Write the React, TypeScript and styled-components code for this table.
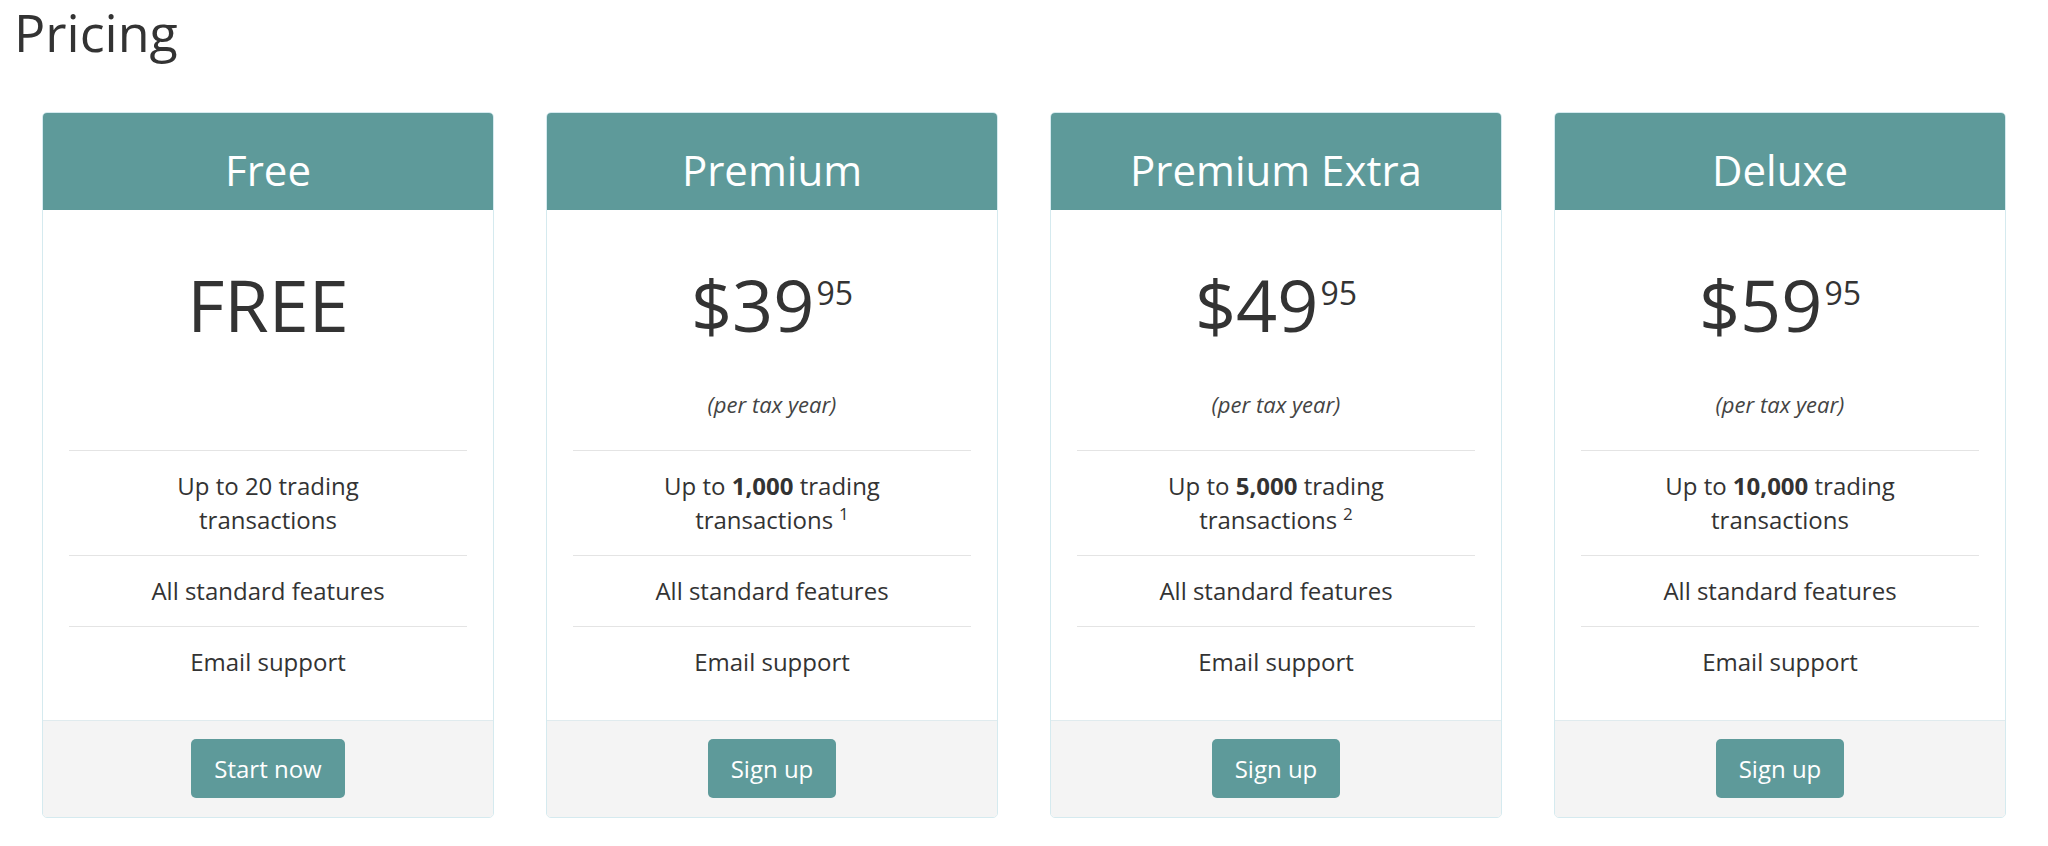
import React from "react";
import styled, { createGlobalStyle } from "styled-components";

type Plan = {
  name: string;
  price?: string;
  cents?: string;
  limit: React.ReactNode;
  note?: string;
  cta: string;
};

const plans: Plan[] = [
  { name: "Free", limit: <>Up to 20 trading transactions</>, cta: "Start now" },
  {
    name: "Premium",
    price: "39",
    cents: "95",
    limit: <>Up to <b>1,000</b> trading transactions</>,
    note: "1",
    cta: "Sign up",
  },
  {
    name: "Premium Extra",
    price: "49",
    cents: "95",
    limit: <>Up to <b>5,000</b> trading transactions</>,
    note: "2",
    cta: "Sign up",
  },
  {
    name: "Deluxe",
    price: "59",
    cents: "95",
    limit: <>Up to <b>10,000</b> trading transactions</>,
    cta: "Sign up",
  },
];

const App: React.FC = () => {
  return (
    <Page>
      <GlobalStyle />
      <Title>Pricing</Title>
      <Grid>
        {plans.map((plan) => (
          <Card key={plan.name}>
            <CardHeader>{plan.name}</CardHeader>
            <CardBody>
              <Price>
                {plan.price ? (
                  <>
                    ${plan.price}
                    <Cents>{plan.cents}</Cents>
                  </>
                ) : (
                  "FREE"
                )}
              </Price>
              <Period>{plan.price ? "(per tax year)" : "\u00a0"}</Period>
              <Features>
                <li>
                  {plan.limit}
                  {plan.note && <sup>{plan.note}</sup>}
                </li>
                <li>All standard features</li>
                <li>Email support</li>
              </Features>
            </CardBody>
            <CardFooter>
              <Button>{plan.cta}</Button>
            </CardFooter>
          </Card>
        ))}
      </Grid>
    </Page>
  );
};

const GlobalStyle = createGlobalStyle`
  body {
    margin: 0;
    background: #fff;
    color: #333;
    font-family: "Open Sans", "Liberation Sans", sans-serif;
  }
`;

const teal = "#5e9a9a";

const Page = styled.div`
  padding: 0 14px 30px;
`;

const Title = styled.h1`
  margin: 0;
  padding-top: 1px;
  font-size: 52px;
  font-weight: 400;
  line-height: 62px;
  color: #333;
`;

const Grid = styled.div`
  display: grid;
  grid-template-columns: repeat(4, 1fr);
  gap: 52px;
  margin-top: 49px;
  padding: 0 28px;
`;

const Card = styled.div`
  display: flex;
  flex-direction: column;
  border: 1px solid #d5eaef;
  border-radius: 5px;
  overflow: hidden;
`;

const CardHeader = styled.h3`
  margin: 0;
  padding: 32px 0 15px;
  background: ${teal};
  color: #fff;
  font-size: 42px;
  font-weight: 400;
  line-height: 50px;
  text-align: center;
`;

const CardBody = styled.div`
  padding: 51px 26px 23px;
  text-align: center;
`;

const Price = styled.div`
  font-size: 72px;
  line-height: 86px;
  color: #333;
`;

const Cents = styled.span`
  font-size: 32px;
  line-height: 1;
  vertical-align: 27px;
  margin-left: 2px;
`;

const Period = styled.div`
  margin: 41px 0 30px;
  font-size: 22px;
  font-style: italic;
  line-height: 32px;
  color: #444;
`;

const Features = styled.ul`
  list-style: none;
  margin: 0;
  padding: 0;

  li {
    border-top: 1px solid #e4e4e4;
    padding: 18px 56px;
    font-size: 24px;
    line-height: 34px;
    color: #333;
  }

  b {
    font-weight: 700;
  }

  sup {
    font-size: 17px;
    line-height: 0;
    margin-left: 6px;
  }
`;

const CardFooter = styled.div`
  display: flex;
  justify-content: center;
  padding: 18px 0 19px;
  background: #f4f4f4;
  border-top: 1px solid #e0ebee;
`;

const Button = styled.button`
  border: none;
  border-radius: 5px;
  padding: 11px 23px 11px;
  background: ${teal};
  color: #fff;
  font-family: "Open Sans", "Liberation Sans", sans-serif;
  font-size: 24px;
  line-height: 37px;
  cursor: pointer;
`;

export default App;
